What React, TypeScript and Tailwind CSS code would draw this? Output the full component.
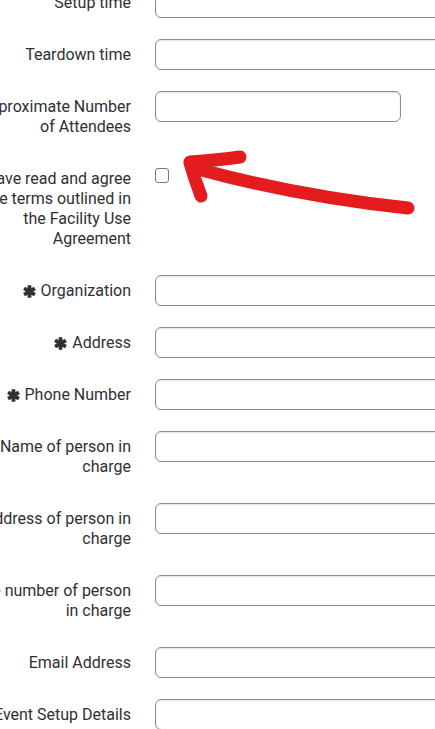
type Row = {
  lines: string[]
  required?: boolean
  kind?: 'input' | 'short' | 'checkbox'
}

const ROWS: Row[] = [
  { lines: ['Setup time'] },
  { lines: ['Teardown time'] },
  { lines: ['Approximate Number', 'of Attendees'], kind: 'short' },
  {
    lines: ['I have read and agree', 'to the terms outlined in', 'the Facility Use', 'Agreement'],
    kind: 'checkbox',
  },
  { lines: ['Organization'], required: true },
  { lines: ['Address'], required: true },
  { lines: ['Phone Number'], required: true },
  { lines: ['Name of person in', 'charge'] },
  { lines: ['Address of person in', 'charge'] },
  { lines: ['Phone number of person', 'in charge'] },
  { lines: ['Email Address'] },
  { lines: ['Event Setup Details'] },
]

// heavy six-armed asterisk used as the "required" marker
function RequiredMark() {
  return (
    <svg width="13" height="13" viewBox="-6.5 -6.5 13 13" className="mr-[5px] shrink-0" aria-hidden>
      <g fill="currentColor">
        <rect x="-1.9" y="-6.3" width="3.8" height="12.6" rx="0.6" />
        <rect x="-1.9" y="-6.3" width="3.8" height="12.6" rx="0.6" transform="rotate(60)" />
        <rect x="-1.9" y="-6.3" width="3.8" height="12.6" rx="0.6" transform="rotate(120)" />
      </g>
    </svg>
  )
}

function Field({ kind = 'input' }: { kind?: Row['kind'] }) {
  if (kind === 'checkbox') {
    return (
      <input
        type="checkbox"
        className="mt-[5px] h-[15px] w-[14px] appearance-none rounded-[3px] border border-[#7a7a7a] bg-white"
      />
    )
  }
  return (
    <input
      type="text"
      className={`h-[31px] rounded-[6px] border border-[#8c8c8c] bg-white shadow-[inset_0_1px_2px_rgba(0,0,0,0.12)] ${
        kind === 'short' ? 'w-[246px]' : 'w-[420px]'
      }`}
    />
  )
}

export default function App() {
  return (
    <div
      className="relative h-[729px] w-[435px] overflow-hidden bg-white text-[#2f3033]"
      style={{ fontFamily: 'Roboto, "Liberation Sans", sans-serif' }}
    >
      <form className="-ml-[60px] -mt-[13px] flex w-[700px] flex-col">
        {ROWS.map((row, i) => (
          <div key={i} className="mb-5 flex items-start">
            <label className="flex w-[203px] shrink-0 flex-col items-end py-[6px] pr-3 text-right text-[16px] leading-[20px]">
              {row.lines.map((line, j) => (
                <span key={j} className="flex items-center whitespace-nowrap">
                  {row.required && j === 0 && <RequiredMark />}
                  {line}
                </span>
              ))}
            </label>
            <div className="pl-3">
              <Field kind={row.kind} />
            </div>
          </div>
        ))}
      </form>

      {/* hand-drawn annotation arrow */}
      <svg
        className="pointer-events-none absolute left-0 top-0"
        width="435"
        height="729"
        viewBox="0 0 435 729"
        fill="none"
      >
        <g stroke="#e41c1d" strokeWidth="13" strokeLinecap="round" strokeLinejoin="round">
          <path d="M408 208 Q 300 197 194 168" />
          <path d="M190 162 Q 218 160 240 157" />
          <path d="M190 163 Q 195 180 201 196" />
        </g>
      </svg>
    </div>
  )
}
